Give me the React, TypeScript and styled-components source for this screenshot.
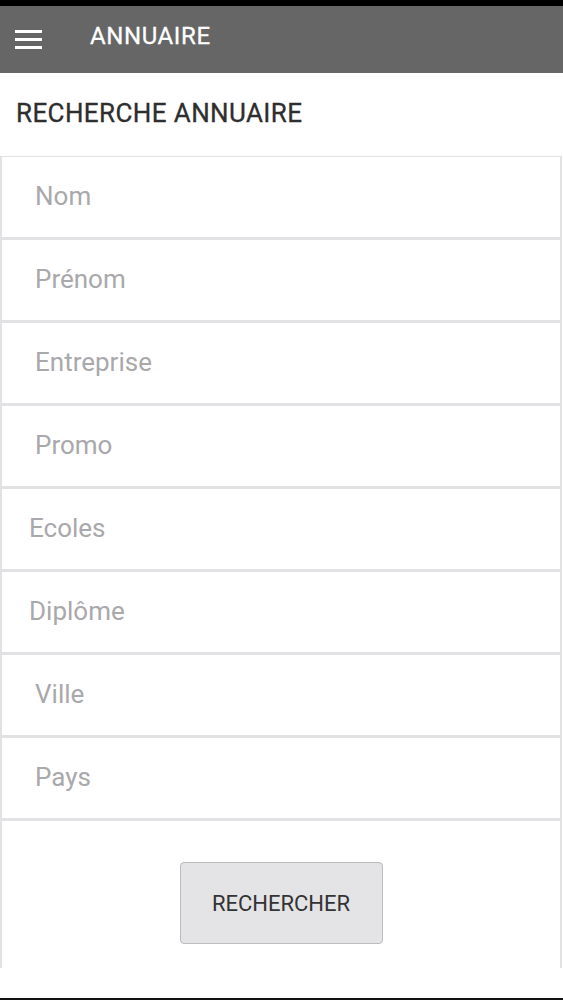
import React from 'react';
import styled, { createGlobalStyle } from 'styled-components';

const GlobalStyle = createGlobalStyle`
    html, body {
        margin: 0;
        padding: 0;
        background-color: #ffffff;
        font-family: Roboto, "Liberation Sans", sans-serif;
    }
    * {
        box-sizing: border-box;
    }
`;

const Page = styled.div`
    display: flex;
    flex-direction: column;
    height: 1000px;
    border-top: 6px solid #000000;
    border-bottom: 2px solid #111111;
    background-color: #ffffff;
`;

const Toolbar = styled.header`
    display: flex;
    align-items: center;
    height: 67px;
    padding-left: 15px;
    background-color: #666666;
    color: #ffffff;
`;

const MenuButton = styled.div`
    display: flex;
    flex-direction: column;
    justify-content: space-between;
    width: 27px;
    height: 19px;
    & > span {
        display: block;
        height: 3px;
        background-color: #ffffff;
    }
`;

const ToolbarTitle = styled.h1`
    margin: 0 0 8px 48px;
    font-size: 24px;
    font-weight: 400;
    letter-spacing: 0.6px;
    -webkit-text-stroke: 0.3px #ffffff;
`;

const PageTitle = styled.h2`
    display: flex;
    align-items: center;
    height: 83px;
    margin: 0;
    padding: 0 0 4px 16px;
    font-size: 26px;
    font-weight: 400;
    letter-spacing: 0.4px;
    color: #2e2e2e;
    -webkit-text-stroke: 0.3px #2e2e2e;
`;

const Form = styled.form`
    display: flex;
    flex-direction: column;
    margin-right: 1px;
    border-left: 2px solid #e2e1e4;
    border-right: 2px solid #e2e1e4;
    border-top: 1px solid #e2e1e4;
`;

const Field = styled.input<{ $indent: number }>`
    display: block;
    width: 100%;
    height: 83px;
    margin: 0;
    padding: 0 0 3px ${(p) => p.$indent}px;
    border: none;
    border-bottom: 3px solid #e2e1e4;
    background-color: #ffffff;
    font-family: Roboto, "Liberation Sans", sans-serif;
    font-size: 26px;
    color: #333333;
    outline: none;
    &::placeholder {
        color: #a9a8ab;
    }
`;

const ButtonRow = styled.div`
    display: flex;
    justify-content: center;
    padding: 41px 0 24px;
`;

const SearchButton = styled.button`
    width: 203px;
    height: 82px;
    border: 1px solid #bcbbbe;
    border-radius: 4px;
    background-color: #e4e3e6;
    font-family: Roboto, "Liberation Sans", sans-serif;
    font-size: 22px;
    color: #333333;
    cursor: pointer;
`;

const fields = [
    { name: 'nom', label: 'Nom', indent: 33 },
    { name: 'prenom', label: 'Prénom', indent: 33 },
    { name: 'entreprise', label: 'Entreprise', indent: 33 },
    { name: 'promo', label: 'Promo', indent: 33 },
    { name: 'ecoles', label: 'Ecoles', indent: 27 },
    { name: 'diplome', label: 'Diplôme', indent: 27 },
    { name: 'ville', label: 'Ville', indent: 33 },
    { name: 'pays', label: 'Pays', indent: 33 },
];

const App = (): JSX.Element => {
    return (
        <>
            <GlobalStyle />
            <Page>
                <Toolbar>
                    <MenuButton>
                        <span />
                        <span />
                        <span />
                    </MenuButton>
                    <ToolbarTitle>ANNUAIRE</ToolbarTitle>
                </Toolbar>
                <PageTitle>RECHERCHE ANNUAIRE</PageTitle>
                <Form onSubmit={(e) => e.preventDefault()}>
                    {fields.map((f) => (
                        <Field key={f.name} name={f.name} placeholder={f.label} $indent={f.indent} />
                    ))}
                    <ButtonRow>
                        <SearchButton type="submit">RECHERCHER</SearchButton>
                    </ButtonRow>
                </Form>
            </Page>
        </>
    );
};

export default App;
